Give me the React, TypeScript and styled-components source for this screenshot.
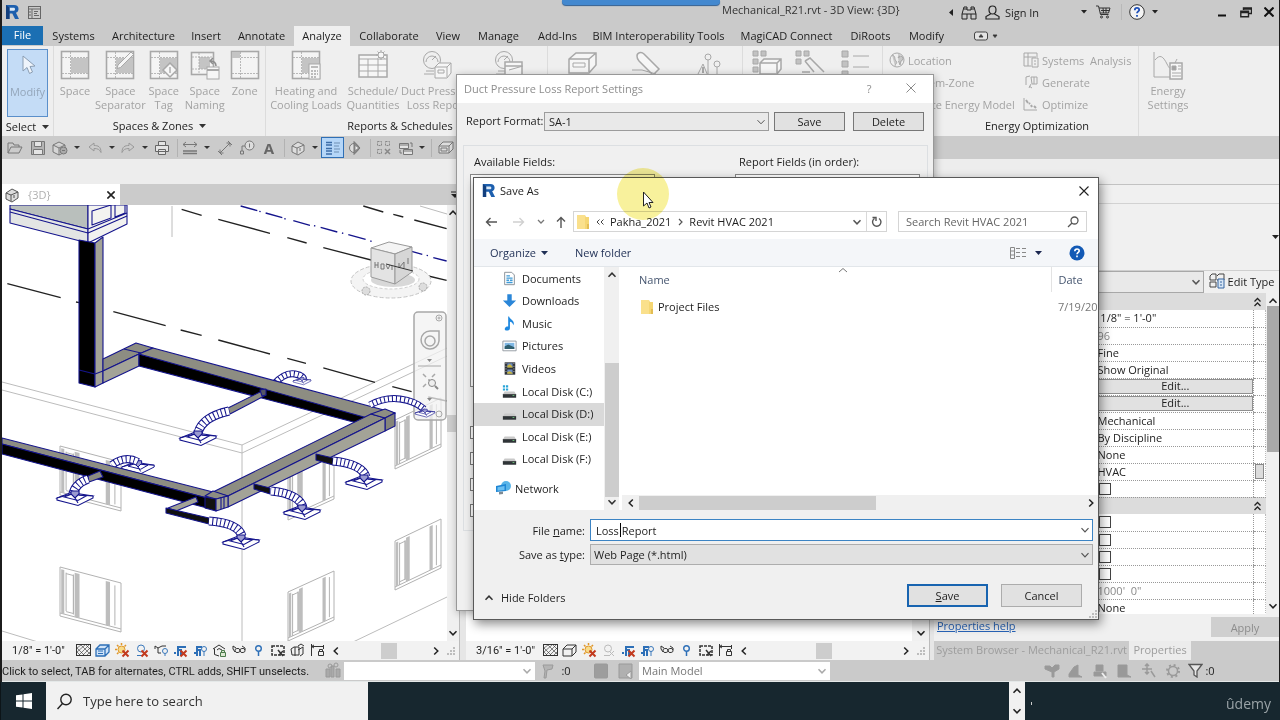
import React from "react";
import styled, { createGlobalStyle, css } from "styled-components";

const Global = createGlobalStyle`
  *, *::before, *::after { box-sizing: border-box; }
  html, body, #root { height: 100%; }
  body { margin: 0; overflow: hidden; background: #cacaca; }
  body, button, input, select { font-family: "Open Sans", "Noto Sans", sans-serif; font-size: 11px; color: #1e1e1e; }
  button { border: 0; padding: 0; background: none; }
  h1, h2, p, ul { margin: 0; padding: 0; font-size: 11px; font-weight: 400; list-style: none; }
  svg { display: block; flex: none; }
`;

/* ---------- shared pieces ---------- */

type IconProps = { w?: number; h?: number; c?: string; sw?: number; vb?: string; children: React.ReactNode };
const Icon = ({ w = 16, h = 16, c = "#666", sw = 1, vb, children }: IconProps) => (
  <svg width={w} height={h} viewBox={vb || `0 0 ${w} ${h}`} fill="none" stroke={c} strokeWidth={sw} aria-hidden="true">
    {children}
  </svg>
);

const Caret = ({ c = "#333" }: { c?: string }) => (
  <Icon w={7} h={4} c="none"><path d="M0 0h7L3.500 4z" fill={c} /></Icon>
);

const turns = { up: 180, down: 0, left: 90, right: 270 };
const Chevron = ({ dir = "down", c = "#555", sw = 1.5 }: { dir?: keyof typeof turns; c?: string; sw?: number }) => (
  <Icon w={10} h={10} c={c} sw={sw}><path d="M1.500 3.200 5 6.800l3.500-3.600" transform={`rotate(${turns[dir]} 5 5)`} /></Icon>
);

const Cross = ({ s = 10, c = "#222", sw = 1.2 }: { s?: number; c?: string; sw?: number }) => (
  <Icon w={s} h={s} c={c} sw={sw} vb="0 0 10 10"><path d="M.5.5l9 9M9.500.5l-9 9" /></Icon>
);

const Cell = styled.span<{ $w: number; $active?: boolean }>`
  flex: 0 0 ${p => p.$w}px;
  height: 100%;
  display: flex;
  align-items: center;
  justify-content: center;
  white-space: nowrap;
  ${p => p.$active && css`background: #b5d6f8; border: 1px solid #2f6fb5; margin: 1px 0; height: 21px;`}
`;
const Spring = styled.span`flex: 1 1 0;`;
const VLine = styled.i<{ $h?: number; $c?: string }>`
  width: 1px;
  height: ${p => p.$h || 18}px;
  background: ${p => p.$c || "#b2b2b2"};
`;

/* ---------- application frame ---------- */

const Screen = styled.div`
  position: relative;
  height: 100vh;
  display: flex;
  flex-direction: column;
  overflow: hidden;
`;
const AppFrame = styled.div`
  flex: 1 1 auto;
  min-height: 0;
  display: flex;
  flex-direction: column;
  background: #cacaca;
  border-left: 2px solid #1c1c1c;
  border-right: 1px solid #1c1c1c;
`;
const TitleBar = styled.header`
  position: relative;
  flex: 0 0 26px;
  display: flex;
  align-items: center;
  padding-left: 2px;
  padding-bottom: 2px;
`;
const DocTitle = styled.h1`
  flex: 0 0 222px;
  padding-bottom: 6px;
  white-space: nowrap;
  color: #333;
`;
const ShareBar = styled.div`
  position: absolute;
  left: 560px;
  top: 0;
  width: 158px;
  height: 5px;
  background: #4388cf;
  border-radius: 0 0 4px 4px;
  box-shadow: 0 1px 1px #2f5e92;
`;

const RevitLogo = ({ s = 15 }: { s?: number }) => (
  <svg width={s} height={s} viewBox="0 0 16 16" aria-label="Revit">
    <path d="M2 1h8c3 0 4.500 1.600 4.500 4 0 2-1 3.200-2.600 3.700L15 15h-4l-2.700-5.600H5.500V15H2z" fill="#1d5fae" />
    <path d="M5.500 3.800h4c1 0 1.500.6 1.500 1.400S10.500 6.700 9.500 6.700h-4z" fill="#dbe9f7" />
    <path d="M2 1l3.500 2.800V15H2z" fill="#123f7e" />
  </svg>
);

const TopBar = () => (
  <TitleBar>
    <ShareBar />
    <Cell $w={16}><RevitLogo s={16} /></Cell>
    <Cell $w={28}>
      <Icon w={13} h={13} c="#666"><rect x=".5" y=".5" width="12" height="12" /><path d="M.5 3h12M4 3v9M6 5.500h4M6 7.500h3M6 9.500h5M1 6h2M1 9h2" /></Icon>
    </Cell>
    <Spring />
    <DocTitle>Mechanical_R21.rvt - 3D View: &#123;3D&#125;</DocTitle>
    <Cell $w={14}><Icon w={4} h={7} c="none"><path d="M4 0v7L0 3.500z" fill="#222" /></Icon></Cell>
    <Cell $w={22}>
      <Icon w={16} h={15} c="#222"><path d="M1 9l2-7h3v3h4V2h3l2 7v5h-5V9H6v5H1zM1 9h5M10 9h5M3 4h3M10 4h3" /></Icon>
    </Cell>
    <Cell $w={24}>
      <Icon w={15} h={15} c="#222" sw={1.2}><path d="M7.500 1c2.300 0 3.500 1.600 3.500 3.800S9.700 9 7.500 9 4 7 4 4.800 5.200 1 7.500 1zM5.500 9L1 11.500V14h13v-2.500L9.500 9" /></Icon>
    </Cell>
    <Cell $w={36}>Sign In</Cell>
    <Cell $w={39} />
    <Cell $w={10}><Icon w={6} h={4} c="none"><path d="M0 0h6L3 3.500z" fill="#222" /></Icon></Cell>
    <Cell $w={28}>
      <Icon w={15} h={14} c="#333"><path d="M0 1h2.500l2 8.500h8M3 3h11l-1.500 5H4.300M5 5.500h8.500M7 3l.5 5M10 3v5" /><circle cx="5.500" cy="12" r="1" /><circle cx="11.500" cy="12" r="1" /></Icon>
    </Cell>
    <Cell $w={8}><VLine $c="#b8b8b8" $h={16} /></Cell>
    <Cell $w={24}>
      <Icon w={16} h={16} c="#333"><circle cx="8" cy="8" r="7.300" fill="#f4f4f4" /><path d="M5.800 6.200c0-1.600 1-2.300 2.200-2.300s2.200.8 2.200 2S8 7.700 8 9.300M8 11v1.700" stroke="#1f50b8" strokeWidth="1.800" /></Icon>
    </Cell>
    <Cell $w={12}><Icon w={6} h={4} c="none"><path d="M0 0h6L3 3.500z" fill="#222" /></Icon></Cell>
    <Cell $w={50} />
    <Cell $w={22}><Icon w={8} h={10} c="#111" sw={2}><path d="M0 8.500h8" /></Icon></Cell>
    <Cell $w={25}><Icon w={12} h={11} c="#222" sw={1.4}><path d="M3.500 3V1h8v5.500h-3M.8 4.200h7.700v5.500H.8z M.8 5.500h7.700M4 2h7" /></Icon></Cell>
    <Cell $w={21}><Cross s={10} sw={2} c="#111" /></Cell>
  </TitleBar>
);

/* ---------- ribbon tabs ---------- */

const TabRow = styled.nav`
  flex: 0 0 20px;
  display: flex;
  align-items: stretch;
`;
const RibbonTab = styled.button<{ $w: number; $kind?: "file" | "on" }>`
  flex: 0 0 ${p => p.$w}px;
  padding-bottom: 2px;
  white-space: nowrap;
  ${p => p.$kind === "file" && css`background: #1b6fb3; color: #fff; height: 19px;`}
  ${p => p.$kind === "on" && css`background: #efefef;`}
`;
const tabs: [string, number, ("file" | "on")?][] = [
  ["File", 41, "file"], ["Systems", 61], ["Architecture", 79], ["Insert", 46], ["Annotate", 65],
  ["Analyze", 56, "on"], ["Collaborate", 78], ["View", 40], ["Manage", 61], ["Add-Ins", 57],
  ["BIM Interoperability Tools", 145], ["MagiCAD Connect", 111], ["DiRoots", 57], ["Modify", 55],
];

/* ---------- ribbon ---------- */

const RibbonBar = styled.section`
  flex: 0 0 89px;
  display: flex;
  background: #efefef;
  color: #a0a0a0;
`;
const Panel = styled.div<{ $w?: number; $line?: boolean }>`
  flex: ${p => (p.$w ? `0 0 ${p.$w}px` : "1 1 0")};
  display: flex;
  flex-direction: column;
  border-right: ${p => (p.$line === false ? 0 : 1)}px solid #dcdcdc;
`;
const PanelBody = styled.div<{ $pad?: number }>`
  flex: 0 0 70px;
  display: flex;
  padding-left: ${p => p.$pad || 0}px;
`;
const PanelName = styled.div<{ $indent?: number }>`
  height: 19px;
  display: flex;
  gap: 6px;
  align-items: center;
  justify-content: center;
  padding-left: ${p => p.$indent || 0}px;
  color: #222;
  white-space: nowrap;
`;
const BigButton = styled.button<{ $w: number; $sel?: boolean }>`
  flex: 0 0 ${p => p.$w}px;
  display: flex;
  flex-direction: column;
  align-items: center;
  padding-top: 4px;
  line-height: 14px;
  color: #a3a3a3;
  white-space: pre;
  svg { margin-bottom: 4px; }
  ${p => p.$sel && css`
    margin: 3px 0 0 5px;
    height: 68px;
    padding-top: 1px;
    background: #c4dcf6;
    border: 1px solid #5a8fca;
    color: #94a6ba;
  `}
`;
const SmallColumn = styled.div<{ $w: number }>`
  flex: 0 0 ${p => p.$w}px;
  padding-top: 3px;
`;
const SmallButton = styled.button`
  height: 22px;
  display: flex;
  align-items: center;
  gap: 3px;
  color: #a3a3a3;
  white-space: pre;
`;

const G = "#a8a8a8";
const SpaceBase = ({ fill = true }: { fill?: boolean }) => (
  <>
    <rect x="1.500" y="1.500" width="27" height="27" fill="#f4f4f4" strokeWidth="1.600" />
    {fill && <rect x="11" y="8" width="17" height="15" fill="#c4c4c4" stroke="none" />}
    <path d="M10.500 2v26M2 7.500h26M2 23.500h26" strokeDasharray="2 1" strokeWidth=".8" />
  </>
);
const Ic = ({ children }: { children: React.ReactNode }) => <Icon w={30} h={30} c={G}>{children}</Icon>;
const Gauge = () => (
  <><circle cx="10" cy="10" r="8.500" /><path d="M4 12a6 6 0 0 1 12 0M10 10l4-4M4 21h8M2 24h10" /></>
);

const Ribbon = () => (
  <RibbonBar>
    <Panel $w={52}>
      <PanelBody>
        <BigButton $w={41} $sel>
          <Icon w={30} h={30} c="#8a9db2"><path d="M10 5l0 15 4-3.500 2.500 6 3-1.500-2.500-5.500 5-.5z" fill="#eef4fb" /></Icon>
          Modify
        </BigButton>
      </PanelBody>
      <PanelName>Select <Caret /></PanelName>
    </Panel>
    <Panel $w={212}>
      <PanelBody $pad={1}>
        <BigButton $w={40}><Ic><SpaceBase /></Ic>Space</BigButton>
        <BigButton $w={49}><Ic><SpaceBase /><path d="M13 15L26 2l2.500 2.500-13 13-3.500 1z" fill="#f6f6f6" /></Ic>{"Space\nSeparator"}</BigButton>
        <BigButton $w={36}><Ic><SpaceBase /><path d="M21 13l7 7-7 7-7-7z" fill="#f6f6f6" strokeWidth="1.500" /><path d="M21 17v6" stroke="#8c8c8c" /></Ic>{"Space\nTag"}</BigButton>
        <BigButton $w={46}><Ic><rect x="1.500" y="2.500" width="22" height="22" fill="#f4f4f4" strokeWidth="1.600" /><rect x="9" y="7" width="11" height="12" fill="#c4c4c4" stroke="none" /><path d="M9 3v22M2 7h22M2 19h22" strokeDasharray="2 1" strokeWidth=".8" /><rect x="17" y="17" width="12" height="12" fill="#f6f6f6" /><path d="M17 20h12" strokeWidth="2" /><path d="M26 16c0-4-2-5-6-5m3-3l-3 3 3 3" stroke="#8c8c8c" strokeWidth="1.500" /></Ic>{"Space\nNaming"}</BigButton>
        <BigButton $w={34}><Ic><SpaceBase fill={false} /><rect x="2" y="2" width="8" height="6" fill="#c4c4c4" stroke="none" /></Ic>Zone</BigButton>
      </PanelBody>
      <PanelName>Spaces &amp; Zones <Caret /></PanelName>
    </Panel>
    <Panel $w={282}>
      <PanelBody>
        <BigButton $w={80}><Ic><SpaceBase /><rect x="18" y="14" width="11" height="15" fill="#f6f6f6" /><path d="M20 17h7M20 21h2M23 21h2M26 21h1M20 24h2M23 24h2M26 24h1M20 27h2M23 27h2" strokeWidth="1.500" /></Ic>{"Heating and\nCooling Loads"}</BigButton>
        <BigButton $w={54}><Ic><rect x="1" y="5" width="28" height="22" fill="#f6f6f6" strokeWidth="1.500" /><path d="M1 9h28M1 15h28M1 21h28M10 9v18M20 9v18" /><circle cx="23" cy="5" r="3" fill="#f6f6f6" /><path d="M23 0v10M18 5h10M19.500 1.500l7 7M26.500 1.500l-7 7" strokeDasharray="2 6" /></Ic>{"Schedule/\nQuantities"}</BigButton>
        <BigButton $w={74}><Ic><Gauge /><path d="M13 17l4-4h12v10l-4 5H13zM13 17h12v10M25 17l4-4" fill="#f6f6f6" /><path d="M16 20h6v3h-6z" /></Ic>{"Duct Pressure\nLoss Report"}</BigButton>
        <BigButton $w={70}><Ic><Gauge /><path d="M11 12h17v16H11zM11 16h17" fill="#f6f6f6" strokeWidth="1.500" /><path d="M15 20l14-4" /></Ic></BigButton>
      </PanelBody>
      <PanelName>Reports &amp; Schedules <Caret /></PanelName>
    </Panel>
    <Panel $w={195}>
      <PanelBody>
        <BigButton $w={68}><Ic><path d="M2 9l7-6h20v12l-7 8H2zM2 9h20v13M22 9l7-6" fill="#f6f6f6" strokeWidth="1.500" /><path d="M6 13h12v4H6z" /></Ic></BigButton>
        <BigButton $w={60}><Ic><path d="M6 6c0-3 4-5 7-2l15 15-6 6L8 11c-1.500-1.500-2-3-2-5z" fill="#f6f6f6" strokeWidth="1.500" /><path d="M1 20h10l14 4" /></Ic></BigButton>
        <BigButton $w={60}><Ic><circle cx="17" cy="7" r="3" /><circle cx="26" cy="14" r="3" /><path d="M17 10v14M26 17v10M6 26l6-12 5 12z" /><path d="M12 17v6" strokeWidth="2" /></Ic></BigButton>
      </PanelBody>
    </Panel>
    <Panel $w={140}>
      <PanelBody $pad={1}>
        <BigButton $w={46}><Ic><path d="M1 1h5v5H1zM9 1h5v5H9zM1 9h5v5H1zM1 17h5v5H1z" fill="#c2c2c2" /><path d="M8 13l4-4h17v10l-4 5H8zM8 13h17v10M25 13l4-4" fill="#f6f6f6" strokeWidth="1.500" /></Ic></BigButton>
        <BigButton $w={40}><Ic><path d="M1 1h5v5H1zM9 1h5v5H9zM1 9h5v5H1z" fill="#c2c2c2" /><path d="M10 11l5-3 14 14M7 22h8M10 11l9 11" strokeWidth="1.500" /></Ic></BigButton>
        <BigButton $w={50}><Ic><path d="M2 1h6v6H2zM2 11h6v6H2zM2 21h6v6H2z" fill="#c2c2c2" /><path d="M13 6h16M13 17h16M13 26h16" /></Ic></BigButton>
      </PanelBody>
    </Panel>
    <Panel>
      <PanelBody $pad={6}>
        <SmallColumn $w={134}>
          <SmallButton><Icon c={G}><circle cx="8" cy="8" r="7" /><path d="M3 3c4 1 2 4 4 6s-1 3-1 5M10 2v4M9 6a2.500 2.500 0 1 1 3 3l-1 4-1.500-4" fill="#c8c8c8" /></Icon>Location</SmallButton>
          <SmallButton><Icon c={G}><path d="M2 2h8v8H2zM8 8h6v6H8z" /></Icon>System-Zone</SmallButton>
          <SmallButton><Icon c={G}><path d="M2 6l6-4 6 4v8H2z" /></Icon>Create Energy Model</SmallButton>
        </SmallColumn>
        <SmallColumn $w={113}>
          <SmallButton><Icon c={G}><path d="M1 1h13v4M1 1v13h7M5 1v13M1 5h12M9 6h6v9H9zM11 9h2M11 12h2" /></Icon>Systems  Analysis</SmallButton>
          <SmallButton><Icon c={G}><path d="M3 3v8M3 3l4-1M6 14l2-4M8 3h6v7H9zM11 3v7M6 12l3 2" /></Icon>Generate</SmallButton>
          <SmallButton><Icon c={G}><path d="M1 2v12h13" /><path d="M3 4l2 3M6 7l1 1M8 9l1 2M11 10l2 2" strokeWidth="2" /></Icon>Optimize</SmallButton>
        </SmallColumn>
      </PanelBody>
      <PanelName $indent={53}>Energy Optimization</PanelName>
    </Panel>
    <Panel $w={140} $line={false}>
      <PanelBody>
        <BigButton $w={58}><Ic><path d="M1 2v25h26M2 10c5-6 8-4 12 4s5 5 10-5" /><rect x="17" y="13" width="12" height="16" fill="#f6f6f6" strokeWidth="1.500" /><path d="M19 16h4v4h-4z" fill="#a4a4a4" /><path d="M25 16h3M25 19h3M19 23h9M19 26h9" /></Ic>{"Energy\nSettings"}</BigButton>
      </PanelBody>
    </Panel>
  </RibbonBar>
);

/* ---------- quick access bar ---------- */

const QuickBar = styled.div`
  flex: 0 0 23px;
  display: flex;
  padding-left: 2px;
  background: #cbcbcb;
`;
const BoldA = styled.b`font-size: 15px; color: #666;`;
const Sep = ({ w }: { w: number }) => <Cell $w={w}><VLine /></Cell>;
const Drop = ({ w }: { w: number }) => <Cell $w={w}><Icon w={6} h={3} c="none"><path d="M0 0h6L3 3z" fill="#333" /></Icon></Cell>;
const House = () => <path d="M2 6l6-4 6 3v6l-6 4-6-3zM2 6l5 2v6M7 8l7-3M10 8v3" fill="#ddd" />;

const QuickAccess = () => (
  <QuickBar>
    <Cell $w={22}><Icon c="#777"><path d="M1 13V3h5l1 2h5v2M1 13l3-6h11l-3 6z" /></Icon></Cell>
    <Cell $w={24}><Icon c="#777"><path d="M1.500 1.500h13v13h-13z" fill="#b4b4b4" /><path d="M4.500 1.500h7v5h-7zM3.500 9.500h9v5h-9z" fill="#e4e4e4" /></Icon></Cell>
    <Cell $w={20}><Icon c="#777"><path d="M1 5l6-3 6 3v7l-6 3-6-3zM1 5l6 3 6-3M7 8v7" fill="#d5d5d5" /><circle cx="11.500" cy="10.500" r="3.500" fill="#aaa" /><path d="M10 10.500h3" /></Icon></Cell>
    <Drop w={14} />
    <Cell $w={22}><Icon c="#999"><path d="M2 7l5-4v2.500c4 0 7 1 7 7-1.500-3-3-4-7-4V11z" /></Icon></Cell>
    <Drop w={11} />
    <Cell $w={22}><Icon c="#999"><path d="M14 7L9 3v2.500c-4 0-7 1-7 7 1.500-3 3-4 7-4V11z" /></Icon></Cell>
    <Drop w={11} />
    <Cell $w={24}><Icon c="#666"><path d="M4.500 1.500h7v4h-7zM1.500 5.500h13v6h-13zM4.500 9.500h7v5h-7z" fill="#e4e4e4" /></Icon></Cell>
    <Sep w={6} />
    <Cell $w={20}><Icon c="#777"><path d="M1 4.500h14M4 2L1 4.500 4 7M12 2l3 2.500L12 7" /><path d="M1 11h14M1 13.500h14" strokeWidth="1.500" /></Icon></Cell>
    <Drop w={13} />
    <Cell $w={24}><Icon c="#777"><path d="M3 13L13 3M1 11l4 4M11 1l4 4M3 9.500V13h3.500M13 6.500V3H9.500" /></Icon></Cell>
    <Cell $w={20}><Icon c="#777"><circle cx="10.500" cy="5.500" r="4.500" fill="#ddd" /><path d="M10.500 3.500v4M6 6H3v5M1.500 11h3v3h-3z" /></Icon></Cell>
    <Cell $w={24}><BoldA>A</BoldA></Cell>
    <Sep w={7} />
    <Cell $w={20}><Icon c="#777"><House /></Icon></Cell>
    <Drop w={13} />
    <Cell $w={23} $active><Icon c="#3c6ca6" sw={1.5}><path d="M1 2.500h6M1 5h6M1 8.500h6M1 11h6M1 14h6" /><path d="M9 3h6M9 6h5M9 9h6M9 12h5" stroke="#6f8fb3" strokeWidth="1" /></Icon></Cell>
    <Cell $w={22}><Icon c="#777"><circle cx="7" cy="8" r="4.500" fill="#ddd" /><path d="M7 1.500L13 8l-6 6.500z" fill="#8a8a8a" /><path d="M8.500 6L11 8l-2.500 2z" fill="#eee" stroke="none" /></Icon></Cell>
    <Sep w={8} />
    <Cell $w={20}><Icon c="#888"><path d="M1.500 1.500h4v4h-4zM9.500 1.500h4v4h-4zM1.500 9.500h4v4h-4z" strokeDasharray="2 1" /><path d="M9 9l5 5M14 9l-5 5" strokeWidth="1.500" /></Icon></Cell>
    <Cell $w={24}><Icon c="#777"><path d="M1.500 3.500h9v5h-9zM5.500 9.500h9v5h-9z" fill="#e4e4e4" /><path d="M1 5h9M5 11h9M12 3h2v4M4 13H2v-3" /></Icon></Cell>
    <Drop w={8} />
    <Sep w={10} />
    <Cell $w={20}><Icon c="#777"><path d="M1 6l4-4h10v7l-4 4H1zM1 6h10v7M11 6l4-4" fill="#ddd" /><path d="M3 8h6v3H3z" /></Icon></Cell>
  </QuickBar>
);

/* ---------- drawing views ---------- */

const OptionsBar = styled.div`flex: 0 0 25px; background: #ededed;`;
const WorkArea = styled.main`
  flex: 1 1 auto;
  min-height: 0;
  display: flex;
  background: #ededed;
`;
const View = styled.section<{ $w?: number }>`
  flex: ${p => (p.$w ? `0 0 ${p.$w}px` : "1 1 0")};
  min-width: 0;
  display: flex;
  flex-direction: column;
  background: #fff;
`;
const ViewTabs = styled.div`
  flex: 0 0 21px;
  display: flex;
  align-items: center;
  justify-content: space-between;
  background: #cbcbcb;
`;
const ViewTab = styled.div`
  width: 118px;
  height: 100%;
  padding: 0 5px 0 2px;
  display: flex;
  align-items: center;
  justify-content: space-between;
  background: #fff;
  color: #b0b0b0;
  span { flex: 1; padding-left: 8px; }
`;
const ViewBody = styled.div`flex: 1 1 0; min-height: 0; display: flex;`;
const Canvas = styled.div`flex: 1 1 0; min-width: 0; overflow: hidden; background: #fff;`;
const VScroll = styled.div<{ $w?: number }>`
  flex: 0 0 ${p => p.$w || 12}px;
  display: flex;
  flex-direction: column;
  align-items: center;
  justify-content: space-between;
  padding: 3px 0;
  background: #f0f0f0;
`;
const Thumb = styled.i<{ $w: number; $h: number; $c?: string }>`
  width: ${p => p.$w}px;
  height: ${p => p.$h}px;
  background: ${p => p.$c || "#cdcdcd"};
`;
const ControlBar = styled.div`
  flex: 0 0 19px;
  display: flex;
  align-items: center;
  background: #f2f2f2;
  overflow: hidden;
`;
const ScaleText = styled.span<{ $w: number }>`
  flex: 0 0 ${p => p.$w}px;
  padding-left: 10px;
  font-family: Roboto, sans-serif;
  white-space: nowrap;
`;
const Gutter = styled.div<{ $w: number }>`flex: 0 0 ${p => p.$w}px; background: #e6e6e6; border-left: 1px solid #bbb;`;

const RedX = () => <path d="M7.500 7.500l6 6M13.500 7.500l-6 6" stroke="#c23a1e" strokeWidth="2" />;
const controlIcons: Record<string, React.ReactNode> = {
  detail: <><rect x=".5" y="1.500" width="14" height="11" /><path d="M1 5l4-3M1 9l8-7M2 13L13 2M6 13l8-8M10 13l4-4M1 9l4 4M1 5l8 8M5 2l9 9M10 2l4 4" strokeWidth=".6" /></>,
  style: <><path d="M1 6l4-4h9v7l-4 4H1zM1 6h9v7M10 6l4-4" fill="#cfe3f8" stroke="#2d6fb7" strokeWidth="1.300" /><path d="M3 8h5M3 10.500h5" stroke="#2d6fb7" /></>,
  wire: <path d="M1 6l4-4h9v7l-4 4H1zM1 6h9v7M10 6l4-4" />,
  sun: <><circle cx="6.500" cy="6.500" r="3.500" fill="#f8dc8a" stroke="#e0972a" /><path d="M6.500 0v2M0 6.500h2M2 2l1.500 1.500M11 2L9.500 3.500M2 11l1.500-1.500" stroke="#e0972a" strokeWidth="1.500" /><RedX /></>,
  shadow: <><circle cx="7" cy="5.500" r="3.500" stroke="#3a78bb" /><path d="M3 12.500h5" stroke="#3a78bb" /><RedX /></>,
  noshadow: <><circle cx="7" cy="5.500" r="3.500" stroke="#bbb" /><path d="M3 12.500h5M8 8l5 5M13 8l-5 5" stroke="#bbb" /></>,
  render: <><path d="M1 3l3 2v5h3M4 5l4-2h4M1 3v3" /><circle cx="11" cy="8" r="2.500" stroke="#3a78bb" /><path d="M11 10.500V13" stroke="#3a78bb" /></>,
  cropOff: <><path d="M1 10h2M5 13V4h8M5 7h3v6" stroke="#2d6fb7" strokeWidth="2" /><RedX /></>,
  crop: <><path d="M1 10h2M4 13V4h5M4 7h3v6" stroke="#2d6fb7" strokeWidth="2" /><circle cx="11" cy="6" r="2.500" stroke="#3a78bb" /><path d="M11 8v5" stroke="#3a78bb" /></>,
  lock: <><path d="M1 6l6-4 6 4M2.500 5.500v6L7 13M5 7l2-1.500L10 7" /><path d="M8.500 9.500h5v4h-5zM9.500 9V7.500h3V9" fill="#dbe8d2" stroke="#4b7a4b" /></>,
  glasses: <path d="M1 3l3 2M1 3v3l2 3M3 8a2.500 2 0 1 0 5-1 2.500 2 0 1 0-5 1M8 8a2.500 2 0 1 0 5-1 2.500 2 0 1 0-5 1M13 7V5l-3-2" />,
  bulb: <><circle cx="7.500" cy="5.500" r="2.800" stroke="#2d6fb7" strokeWidth="1.400" /><path d="M7.500 8.500V13" stroke="#2d6fb7" strokeWidth="1.500" /></>,
  temp: <><rect x="1" y="3" width="12" height="9" strokeDasharray="3 1" strokeWidth="1.500" /><path d="M7 7l5 6M12 8l-4 4" strokeWidth="1.500" /></>,
  analytic: <path d="M1 6l3-2h5v8H2zM5 4v9M8 7l5-3v7l-3 2M8 3l3-2 3 2" />,
  constraint: <><path d="M1.500 1v12M1 3.500h12M13.500 2v4M4 2L1.500 3.500 4 5" /><path d="M8.500 8.500h5v4h-5zM9.500 8V6.500h3V8" /></>,
};
const leftIcons = ["detail", "style", "sun", "shadow", "render", "cropOff", "crop", "lock", "glasses", "bulb", "temp", "analytic", "constraint"];
const rightIcons = ["detail", "wire", "sun", "noshadow", "cropOff", "crop", "glasses", "bulb", "temp", "constraint"];

const Grip = () => (
  <Icon w={9} h={9} c="none"><path d="M7 1h2v2H7zM4 4h2v2H4zM7 4h2v2H7zM1 7h2v2H1zM4 7h2v2H4zM7 7h2v2H7z" fill="#bdbdbd" /></Icon>
);

const ViewControls = ({ scale, w, icons, pre }: { scale: string; w: number; icons: string[]; pre: number }) => (
  <ControlBar>
    <ScaleText $w={w}>{scale}</ScaleText>
    {icons.map((n, i) => <Cell key={n} $w={i % 2 ? 19 : 20}><Icon w={15} h={15} c="#333">{controlIcons[n]}</Icon></Cell>)}
    <Cell $w={18}><Chevron dir="left" c="#222" /></Cell>
    <Cell $w={pre} />
    <Thumb $w={16} $h={16} />
    <Spring />
    <Cell $w={10}><Chevron dir="right" c="#222" /></Cell>
    <Cell $w={18}><Grip /></Cell>
  </ControlBar>
);

const NAVY = "#14148c";

const Diffuser = ({ x, y, s = 1 }: { x: number; y: number; s?: number }) => (
  <g transform={`translate(${x} ${y}) scale(${s})`} stroke={NAVY} strokeWidth={1.1} fill="#fff">
    <path d="M-18 0-4-5.500 18-2 3 5z" /><path d="M-18 0v2L3 7.500 18 0v-2" /><path d="M-11-1l8-3 14 2L3 2.500z" />
    <path d="M-4-4v-3h8v3L0 0zM-18 0L-4-4M18-2L4-3M3 5L0 0" fill="#9a9ad0" />
  </g>
);
const Flex = ({ d, w = 8 }: { d: string; w?: number }) => (
  <g fill="none"><path d={d} stroke={NAVY} strokeWidth={w + 1} /><path d={d} stroke="#fff" strokeWidth={w - 1} strokeDasharray="3 1" /></g>
);

/* A window on the west (rise > 0) or south (rise < 0) wall, in oblique view. */
const WallWindow = ({ x, y, w, rise }: { x: number; y: number; w: number; rise: number }) => {
  const at = (t: number, v: number) => `${x + w * t} ${y + rise * t + v}`;
  const bar = (a: number, b: number) => `M${at(a, 2)}L${at(b, 2)}L${at(b, 46)}L${at(a, 46)}z`;
  return (
    <g stroke="#b2b2b2" strokeWidth="1" fill="none">
      <path d={`M${at(0, 0)}L${at(1, 0)}L${at(1, 49)}L${at(0, 49)}z`} />
      <path d={`M${at(0, 46)}L${at(1, 46)}M${at(0.1, 5)}L${at(0.22, 5)}L${at(0.22, 43)}M${at(0.1, 43)}L${at(0.22, 43)}`} />
      <path d={bar(0.24, 0.32) + bar(0.75, 0.82) + bar(0.02, 0.07)} fill="#bdbdbd" stroke="none" />
      <path d={`M${at(0.1, 4)}V${y + 44}M${at(0.22, 4)}L${at(0.22, 44)}M${at(0.9, 4)}L${at(0.9, 44)}`} />
    </g>
  );
};

const Model = () => (
  <svg width="445" height="437" viewBox="2 204 445 437" fill="none" role="img" aria-label="3D duct model">
    <g stroke="#bcbcbc">
      <path d="M2 381L242 444 447 347M2 389L242 452 447 355M242 444V641M2 630L38 641M353 641L447 596M172 205V236M420 205L447 213" />
    </g>
    <WallWindow x={60} y={445} w={61} rise={16} />
    <WallWindow x={60} y={566} w={61} rise={16} />
    <WallWindow x={288} y={470} w={46} rise={-21} />
    <WallWindow x={288} y={591} w={46} rise={-21} />
    <WallWindow x={395} y={419} w={46} rise={-22} />
    <WallWindow x={395} y={540} w={46} rise={-22} />
    <g transform="translate(0 180) scale(.3333)" stroke="#222" strokeWidth="4">
      <path d="M22 308l160 42M228 363l10 2M340 392l157 42M542 447l63 16M655 477l155 42M862 532l56 15M970 561l155 43M1177 617l58 15M1285 648l55 12" />
      <path d="M545 85l60 18M655 115l155 42M862 170l58 16M970 200l155 40M1285 285l55 13M1090 75l60 18M1180 100l30 8M1243 117l97 26" />
      <path d="M722 75l50 14M778 91l4 1M797 96l50 14M853 113l4 1M880 119l50 14M942 134l4 1M962 139l50 14M1026 156l4 1M1045 161l52 14M1111 180l4 1M1235 211l32 9M1280 223l4 1M1300 230l40 10" stroke={NAVY} />
    </g>

    <g stroke={NAVY} strokeWidth="1.100" strokeLinejoin="round">
      <path d="M10 204h78v24L10 208z" fill="#b9bfbc" />
      <path d="M10 208L88 228V242L10 222z" fill="#e3e5e4" />
      <path d="M88 204h39v19L88 242z" fill="#f2f2f0" />
      <path d="M10 211L88 232 127 215M88 228L127 212M92 224v-14l19-6v13zM115 204v12l10-4v-8" />
      <path d="M79 239L95 242V386L79 382z" fill="#000" />
      <path d="M95 242L103 236V382L95 386z" fill="#a3a397" />
      <path d="M79 369L95 373 103 370" />
      <path d="M103 358L136 342 153 347 139 353 103 370z" fill="#8d8d82" />
      <path d="M103 370L139 353V365L103 382z" fill="#a3a397" />
      <path d="M124 348L141 352" />
    </g>

    <Flex d="M274 383Q285 371 295 373T303 379" w={6} />
    <Diffuser x={302} y={380} s={0.5} />
    <g stroke={NAVY} strokeWidth="1.100" strokeLinejoin="round">
      <path d="M139 353L371 415 361 423 139 365z" fill="#000" />
      <path d="M153 347L395 412 371 418 139 353z" fill="#8d8d82" />
      <path d="M228 407L262 390 266 394 230 413z" fill="#8d8d82" />
      <path d="M260 389l6-1v6l-4 1z" fill="#556" />
    </g>
    <Flex d="M229 410Q202 416 198 432" />
    <Diffuser x={198} y={437} />
    <Diffuser x={138} y={466} s={0.9} />
    <Flex d="M112 464Q125 454 138 461" w={7} />
    <g stroke={NAVY} strokeWidth="1.100" strokeLinejoin="round">
      <path d="M371 413L213 491 228 495 385 417z" fill="#8d8d82" />
      <path d="M371 413L385 408 395 412 385 417z" fill="#8d8d82" />
      <path d="M385 417L395 412V425L385 430z" fill="#85857a" />
      <path d="M385 417L228 495V506L385 430z" fill="#a3a397" />
      <path d="M2 437L213 491 207 497 2 443z" fill="#8d8d82" />
      <path d="M2 443L207 497V507L2 453z" fill="#000" />
      <path d="M205 495L213 490 228 495 216 498z" fill="#8d8d82" />
      <path d="M205 496L216 498V510L205 507z" fill="#111" />
      <path d="M216 498L228 495V506L216 510z" fill="#a3a397" />
      <path d="M221 496V508M224 496V507" />
      <path d="M88 475L100 470 103 476 89 481z" fill="#8d8d82" />
      <path d="M196 496L168 507 176 510 198 501z" fill="#a3a397" />
      <path d="M166 507L209 517V523L166 512z" fill="#111" />
      <path d="M254 483L270 487V493L254 488z" fill="#111" />
      <path d="M316 453L333 457V464L316 459z" fill="#111" />
    </g>
    <Flex d="M88 478Q75 483 73 493" />
    <Diffuser x={75} y={497} />
    <Flex d="M333 460Q362 463 366 476" />
    <Diffuser x={364} y={481} />
    <Flex d="M271 490Q300 493 303 507" />
    <Diffuser x={302} y={511} />
    <Flex d="M209 520Q238 522 242 535" />
    <Diffuser x={241} y={541} />

    <g>
      <ellipse cx="391" cy="280" rx="40" ry="17" stroke="#c4c4c4" strokeDasharray="4 2" fill="#f4f4f4" />
      <ellipse cx="391" cy="278" rx="28" ry="10" fill="#fff" stroke="#d0d0d0" strokeDasharray="3 2" />
      <ellipse cx="393" cy="279" rx="22" ry="7" fill="#d8d8d8" />
      <path d="M371 247L389 241 412 246 395 253z" fill="#f4f4f4" stroke="#999" />
      <path d="M371 247L395 253V283L371 276z" fill="#e3e3e3" stroke="#999" />
      <path d="M395 253L412 246V271L395 283z" fill="#d6d6d6" stroke="#999" />
      <path d="M375 261v6M375 264h3M378 261v6M381 263h3v5h-3zM386 264l2 4 2-4M392 265v4M399 262v5l5-6v6M408 257v6" stroke="#777" />
      <path d="M386 263L413 270" stroke="#333" />
      <circle cx="366" cy="290" r="4" fill="#ddd" stroke="#aaa" strokeDasharray="2 1" />
      <circle cx="423" cy="286" r="4" fill="#ddd" stroke="#aaa" strokeDasharray="2 1" />
    </g>
    <g stroke="#a8a8a8">
      <rect x="414" y="311" width="32" height="108" rx="4" fill="#f2f2f2" fillOpacity=".75" strokeWidth="1.500" />
      <circle cx="439" cy="317" r="3" /><circle cx="439" cy="317" r="1" />
      <path d="M430 330h9v10a9 9 0 1 1-9-10z" strokeWidth="1.500" /><circle cx="430" cy="340" r="5" strokeWidth="1.500" />
      <path d="M427 358h5l-2.500 3zM427 397h5l-2.500 3z" fill="#888" stroke="none" />
      <path d="M418 365h23" />
      <path d="M423 373l3 3M435 373l-3 3M423 386l3-3M428 379h2" strokeWidth="1.500" />
      <circle cx="432" cy="382" r="3.500" fill="#eee" stroke="#888" /><path d="M435 385l3 3" stroke="#888" strokeWidth="2" />
      <circle cx="439" cy="413" r="3" />
    </g>
    <Flex d="M370 404Q385 396 400 398T424 408" w={6} />
    <Diffuser x={425} y={412} s={0.55} />
  </svg>
);

/* ---------- properties palette ---------- */

const Palette = styled.aside`
  flex: 0 0 345px;
  display: flex;
  flex-direction: column;
  background: #f0f0f0;
`;
const PaletteHead = styled.div`
  flex: 0 0 20px;
  border-top: 1px solid #c2c2c2;
  border-bottom: 1px solid #d2d2d2;
`;
const Preview = styled.div`
  flex: 0 0 67px;
  display: flex;
  align-items: center;
  justify-content: flex-end;
  border-bottom: 1px solid #cfcfcf;
`;
const TypeRow = styled.div`
  flex: 0 0 22px;
  display: flex;
  align-items: center;
`;
const SelectBox = styled.span<{ $h: number; $bg?: string; $b?: string; $pad?: number }>`
  position: relative;
  flex: 1 1 0;
  display: flex;
  height: ${p => p.$h}px;
  select, input {
    appearance: none;
    width: 100%;
    height: 100%;
    margin: 0;
    border: 1px solid ${p => p.$b || "#a8a8a8"};
    border-radius: 0;
    padding: 0 4px;
    padding-left: ${p => p.$pad || 4}px;
    background: ${p => p.$bg || "#e9e9e9"};
    outline: 0;
  }
  svg { position: absolute; right: 3px; top: calc(50% - 5px); pointer-events: none; }
`;
const EditType = styled.button`
  flex: 0 0 75px;
  display: flex;
  align-items: center;
  justify-content: center;
  gap: 3px;
  padding-bottom: 2px;
  white-space: nowrap;
`;
const GridArea = styled.div`
  flex: 0 0 321px;
  display: flex;
  overflow: hidden;
`;
const PropTable = styled.table`
  flex: 1 1 0;
  table-layout: fixed;
  border-collapse: collapse;
  background: #fff;
  tr { height: 17px; }
  th, td { padding: 0; line-height: 15px; vertical-align: top; border-bottom: 1px dotted #999; text-align: left; font-weight: 400; white-space: pre; }
  td + td { border-left: 1px dotted #999; border-right: 1px dotted #bbb; }
`;
const GroupRow = styled.tr`
  && th { background: #dcdcdc; border: 0; vertical-align: middle; }
  svg { margin: 0 4px 0 auto; }
`;
const Value = styled.td<{ $dim?: boolean }>`color: ${p => (p.$dim ? "#8a8a8a" : "#222")};`;
const EditButton = styled.button`
  width: 100%;
  height: 15px;
  display: block;
  line-height: 12px;
  background: #e1e1e1;
  border: 1px solid #8f8f8f;
`;
const Tick = styled.input`
  appearance: none;
  display: block;
  width: 12px;
  height: 12px;
  margin: 2px 0 0 1px;
  background: #fff;
  border: 1px solid #444;
`;
const Knob = styled.i`display: block; width: 9px; height: 15px; margin-left: 1px; background: #dcdcdc; border: 1px solid #888;`;
const ApplyRow = styled.div`
  flex: 1 1 0;
  display: flex;
  align-items: flex-start;
  justify-content: space-between;
  padding-left: 3px;
  a { color: #2864b8; margin-top: 4px; }
  button { width: 68px; height: 20px; margin-top: 3px; background: #cfcfcf; color: #8d8d8d; }
`;
const PaletteTabs = styled.div`
  flex: 0 0 19px;
  display: flex;
  background: #cbcbcb;
`;
const PaletteTab = styled.button<{ $w: number; $on?: boolean }>`
  flex: 0 0 ${p => p.$w}px;
  padding-bottom: 2px;
  color: #9d9d9d;
  white-space: nowrap;
  background: ${p => (p.$on ? "#ececec" : "none")};
`;

const Collapse = () => <Icon w={9} h={10} c="#222" sw={1.3}><path d="M1.500 4.500l3-3 3 3M1.500 9l3-3 3 3" /></Icon>;
type Prop = { t?: string; dim?: boolean; kind?: "edit" | "tick" | "knob" };
const graphics: Prop[] = [
  { t: " 1/8\" = 1'-0\"" }, { t: "96", dim: true }, { t: "Fine" }, { t: "Show Original" }, { t: "Edit...", kind: "edit" },
  { t: "Edit...", kind: "edit" }, { t: "Mechanical" }, { t: "By Discipline" }, { t: "None" }, { t: "HVAC", kind: "knob" }, { kind: "tick" },
];
const extents: Prop[] = [
  { kind: "tick" }, { kind: "tick" }, { kind: "tick" }, { kind: "tick" }, { t: "1000'  0\"", dim: true }, { t: "None" },
];
const PropRows = ({ rows }: { rows: Prop[] }) => (
  <tbody>
    <GroupRow><th colSpan={3}><Collapse /></th></GroupRow>
    {rows.map((r, i) => (
      <tr key={i}>
        <th />
        <Value $dim={r.dim}>
          {r.kind === "edit" ? <EditButton>{r.t}</EditButton> : r.kind === "tick" ? <Tick type="checkbox" aria-label="value" /> : r.t}
        </Value>
        <td>{r.kind === "knob" && <Knob />}</td>
      </tr>
    ))}
  </tbody>
);

const Properties = () => (
  <Palette>
    <PaletteHead />
    <Preview><Caret c="#222" /></Preview>
    <TypeRow>
      <SelectBox $h={22}><select aria-label="Type"><option /></select><Chevron /></SelectBox>
      <EditType>
        <Icon w={16} h={16} c="#444"><path d="M1 3l2-2h4v6H1zM8 3l2-2h5v6H8M1 9h6v5H1z" /><path d="M9 6h6v9H9z" fill="#d7e6f6" stroke="#3465a0" /><path d="M11 9h2M11 12h2" stroke="#3465a0" /></Icon>
        Edit Type
      </EditType>
    </TypeRow>
    <GridArea>
      <PropTable>
        <colgroup><col /><col width={156} /><col width={12} /></colgroup>
        <PropRows rows={graphics} />
        <PropRows rows={extents} />
      </PropTable>
      <VScroll $w={13}>
        <Chevron dir="up" c="#222" />
        <Thumb $w={12} $h={146} $c="#a9a9a9" />
        <Spring />
        <Chevron c="#222" />
      </VScroll>
    </GridArea>
    <ApplyRow><a href="#help">Properties help</a><button>Apply</button></ApplyRow>
    <PaletteTabs>
      <PaletteTab $w={195}>System Browser - Mechanical_R21.rvt</PaletteTab>
      <PaletteTab $w={62} $on>Properties</PaletteTab>
    </PaletteTabs>
  </Palette>
);

/* ---------- status bar and taskbar ---------- */

const Status = styled.footer`
  flex: 0 0 22px;
  display: flex;
  align-items: center;
  background: #cacaca;
  border-bottom: 1px solid #e4e8e8;
  white-space: nowrap;
`;
const Hint = styled.p`
  flex: 0 0 318px;
  font-family: Roboto, "Open Sans", sans-serif;
  padding-top: 2px;
`;
const StatusSelect = styled.div`
  flex: 0 0 191px;
  display: flex;
  select { color: #777; }
`;
const S = "#9a9a9a";
const StatusBar = () => (
  <Status>
    <Hint>Click to select, TAB for alternates, CTRL adds, SHIFT unselects.</Hint>
    <Cell $w={24}><Icon w={17} h={17} c={S}><path d="M2 7h4v8H2zM7 4h3v11H7zM12 7h4v8h-4z" fill="#aaa" /><circle cx="6" cy="4" r="2" /><circle cx="12" cy="3" r="2" /></Icon></Cell>
    <StatusSelect><SelectBox $h={18} $bg="#fff" $b="#fff"><select aria-label="Workset"><option /></select><Chevron c="#aaa" /></SelectBox></StatusSelect>
    <Cell $w={26}><Icon c={S}><path d="M3 2h10l-1 4-5 1-1 8H4l1-7z" fill="#b4b4b4" /></Icon></Cell>
    <Cell $w={10}>:0</Cell>
    <Cell $w={18} />
    <Cell $w={24}><Icon w={14} h={16} c={S}><rect x=".5" y="1" width="13" height="14" rx="1" fill="#9d9d9d" /></Icon></Cell>
    <Cell $w={26}><Icon c={S}><path d="M1 1h13v14H1z" fill="#b0b0b0" /><path d="M8 12l5-4v8z" fill="#eee" /></Icon></Cell>
    <StatusSelect><SelectBox $h={18} $bg="#fff" $b="#fff" $pad={2}><select aria-label="Design option"><option>Main Model</option></select><Chevron c="#aaa" /></SelectBox></StatusSelect>
    <Spring />
    <Cell $w={25}><Icon c={S}><path d="M1 3h5l2 2 3-3h4v4l-5 3v5H8V9L1 6z" fill="#999" /></Icon></Cell>
    <Cell $w={24}><Icon c={S}><path d="M1 11l5-7 4-2v10l4 2H1z" fill="#999" /></Icon></Cell>
    <Cell $w={24}><Icon c={S}><path d="M4 2h7v6H4zM2 9h12v4H2z" fill="#999" /><path d="M10 10l4 5" stroke="#eee" strokeWidth="2" /></Icon></Cell>
    <Cell $w={24}><Icon c={S}><path d="M2 2h9v10l4 2H2z" fill="#999" /></Icon></Cell>
    <Cell $w={25}><Icon c={S}><path d="M6 1v10M1 6h10M4 3l2-2 2 2M4 9l2 2 2-2M10 8l4 6" strokeWidth="1.500" /></Icon></Cell>
    <Cell $w={24}><Icon c={S}><circle cx="8" cy="8" r="4.500" strokeWidth="1.500" /><circle cx="8" cy="8" r="6" strokeDasharray="2 2.700" strokeWidth="2" /></Icon></Cell>
    <Cell $w={20}><Icon w={15} h={15} c="#555" sw={1.3}><path d="M1 1.500h13L9 8v6l-3-2V8z" fill="#e6e6e6" /></Icon></Cell>
    <Cell $w={10}>:0</Cell>
    <Cell $w={64} />
  </Status>
);

const Taskbar = styled.div`
  flex: 0 0 38px;
  display: flex;
  background: #17272f;
  border-left: 1px solid #0c1418;
`;
const Start = styled.button`
  flex: 0 0 45px;
  display: flex;
  align-items: center;
  justify-content: center;
`;
const TaskSearch = styled.label`
  flex: 0 0 322px;
  display: flex;
  align-items: center;
  gap: 10px;
  padding-left: 10px;
  background: #f1f1f1;
  input { flex: 1; min-width: 0; border: 0; padding: 0; background: none; font-size: 13px; outline: 0; }
  input::placeholder { color: #333; opacity: 1; }
`;
const TaskScroll = styled.div`
  flex: 0 0 16px;
  display: flex;
  flex-direction: column;
  align-items: center;
  justify-content: space-between;
  padding: 4px 0;
  background: #f1f1f1;
`;
const Brand = styled.span`
  flex: 0 0 255px;
  display: flex;
  align-items: center;
  justify-content: space-between;
  padding: 5px 9px 0 6px;
  font-size: 14px;
  color: #9aa3a7;
  i { width: 1px; height: 3px; background: #ccc; }
`;

const WindowsTaskbar = () => (
  <Taskbar>
    <Start aria-label="Start"><Icon w={16} h={16} c="none"><path d="M0 2.300l6.500-.9v6.100H0zM7.500 1.300L16 0v7.500H7.500zM0 8.500h6.500v6.100L0 13.700zM7.500 8.500H16V16l-8.500-1.200z" fill="#fff" /></Icon></Start>
    <TaskSearch>
      <Icon w={17} h={17} c="#222" sw={1.4}><circle cx="10" cy="6.500" r="5.200" /><path d="M6.500 10.500L1.500 16" /></Icon>
      <input placeholder="Type here to search" aria-label="Search Windows" />
    </TaskSearch>
    <Spring />
    <TaskScroll><Chevron dir="up" c="#222" /><Chevron c="#222" /></TaskScroll>
    <Brand><i />ûdemy</Brand>
  </Taskbar>
);

/* ---------- report settings dialog ---------- */

const Window = styled.section<{ $x: number; $y: number; $w: number; $h: number; $top?: boolean }>`
  position: absolute;
  left: ${p => p.$x}px;
  top: ${p => p.$y}px;
  width: ${p => p.$w}px;
  height: ${p => p.$h}px;
  display: flex;
  flex-direction: column;
  background: #f0f0f0;
  border: 1px solid ${p => (p.$top ? "#585858" : "#989898")};
  box-shadow: ${p => (p.$top ? "2px 4px 10px rgba(0,0,0,.45)" : "1px 2px 8px rgba(0,0,0,.3)")};
`;
const WinTitle = styled.div<{ $h: number; $dim?: boolean }>`
  flex: 0 0 ${p => p.$h}px;
  display: flex;
  align-items: center;
  padding: 0 9px 2px 7px;
  background: #fff;
  color: ${p => (p.$dim ? "#8e8e8e" : "#222")};
  h2 { flex: 1; padding-left: ${p => (p.$dim ? 0 : 4)}px; }
  button { color: inherit; }
`;
const FormatRow = styled.div`
  display: flex;
  align-items: center;
  padding: 9px 9px 0 9px;
  label { flex: 0 0 78px; padding-bottom: 2px; }
`;
const FormatButton = styled.button<{ $gap: number }>`
  width: 71px;
  height: 19px;
  margin-left: ${p => p.$gap}px;
  background: #e1e1e1;
  border: 1px solid #777;
`;
const FieldGroup = styled.fieldset`
  margin: 14px 5px 0 6px;
  padding: 8px 6px 0;
  height: 386px;
  border: 1px solid #dcdfe2;
  display: flex;
  gap: 80px;
  > div { flex: 0 0 185px; }
`;
const FieldName = styled.p`padding: 0 4px 5px; line-height: 15px;`;
const FieldList = styled.div`height: 213px; background: #fff; border: 1px solid #888;`;
const Stack = styled.div`
  display: grid;
  gap: 13px;
  padding-top: 39px;
  input { appearance: none; display: block; width: 13px; height: 13px; margin: 0; border: 1px solid #777; background: #fff; }
`;

const ReportSettings = () => (
  <Window $x={456} $y={74} $w={478} $h={537} aria-label="Duct Pressure Loss Report Settings">
    <WinTitle $h={28} $dim>
      <h2>Duct Pressure Loss Report Settings</h2>
      <Cell $w={58} as="button" aria-label="Help">?</Cell>
      <Cell $w={26} as="button" aria-label="Close"><Cross s={10} c="#8a8a8a" sw={1} /></Cell>
    </WinTitle>
    <FormatRow>
      <label htmlFor="fmt">Report Format:</label>
      <SelectBox $h={19} $b="#9c9c9c"><select id="fmt"><option>SA-1</option></select><Chevron sw={1} /></SelectBox>
      <FormatButton $gap={5}>Save</FormatButton>
      <FormatButton $gap={8}>Delete</FormatButton>
    </FormatRow>
    <FieldGroup>
      <div>
        <FieldName>Available Fields:</FieldName>
        <FieldList />
        <Stack>{[0, 1, 2, 3].map(i => <input key={i} type="checkbox" aria-label="Report option" />)}</Stack>
      </div>
      <div>
        <FieldName>Report Fields (in order):</FieldName>
        <FieldList />
      </div>
    </FieldGroup>
  </Window>
);

/* ---------- save dialog ---------- */

const NavRow = styled.div`
  flex: 0 0 34px;
  display: flex;
  align-items: center;
  padding: 0 11px 1px 3px;
  background: #fff;
`;
const Address = styled.div`
  flex: 1 1 0;
  height: 21px;
  display: flex;
  align-items: center;
  padding-left: 2px;
  border: 1px solid #d5d5d5;
`;
const Crumb = styled.button<{ $w: number }>`flex: 0 0 ${p => p.$w}px; text-align: left; white-space: nowrap;`;
const SearchField = styled.label`
  flex: 0 0 189px;
  height: 21px;
  margin-left: 11px;
  padding: 0 7px;
  display: flex;
  align-items: center;
  border: 1px solid #d5d5d5;
  input { flex: 1; min-width: 0; border: 0; padding: 0; outline: 0; }
  input::placeholder { color: #666; opacity: 1; }
`;
const Tools = styled.div`
  flex: 0 0 28px;
  display: flex;
  align-items: center;
  padding: 0 8px 0 16px;
  background: #f4f6f9;
  border-bottom: 1px solid #e2e6ea;
`;
const ToolButton = styled.button<{ $w: number }>`
  flex: 0 0 ${p => p.$w}px;
  display: flex;
  align-items: center;
  gap: 5px;
  color: #1f2f55;
  white-space: nowrap;
`;
const Browser = styled.div`
  flex: 0 0 243px;
  display: flex;
  background: #fff;
`;
const Side = styled.nav`flex: 0 0 130px; padding-top: 1px;`;
const Places = styled.ul`height: 203px; display: grid; grid-auto-rows: 1fr;`;
const Place = styled.li<{ $on?: boolean; $root?: boolean }>`
  display: flex;
  align-items: center;
  gap: ${p => (p.$root ? 4 : 5)}px;
  padding: 0 0 2px ${p => (p.$root ? 21 : 28)}px;
  background: ${p => (p.$on ? "#d9d9d9" : "none")};
  white-space: nowrap;
`;
const NetworkRow = styled.div`margin-top: 7px; height: 22px; display: grid;`;
const Files = styled.div`
  flex: 1 1 0;
  min-width: 0;
  display: flex;
  flex-direction: column;
`;
const FileArea = styled.div`position: relative; flex: 1 1 0; overflow: hidden;`;
const SortMark = styled.span`position: absolute; left: 219px; top: 0;`;
const FileTable = styled.table`
  width: 100%;
  table-layout: fixed;
  border-collapse: collapse;
  th, td { padding: 0; height: 26px; font-weight: 400; text-align: left; white-space: nowrap; color: #45556f; }
  th { height: 25px; }
  th:first-child, td:first-child { padding-left: 20px; }
  th + th { border-left: 1px solid #e3e3e3; }
  th + th, td + td { padding-left: 7px; }
  td { color: #1e1e1e; padding-top: 3px; }
  td + td { color: #777; }
`;
const FileName = styled.span`display: flex; align-items: center; gap: 4px; padding-left: 1px;`;
const HScroll = styled.div`
  flex: 0 0 15px;
  margin-left: 3px;
  display: flex;
  align-items: center;
  background: #f0f0f0;
`;
const Form = styled.div`
  display: grid;
  grid-template-columns: 111px 1fr;
  column-gap: 5px;
  row-gap: 3px;
  padding: 9px 5px 0 0;
  label { text-align: right; align-self: center; }
`;
const TextCursor = styled.i`position: absolute; left: 30px; top: 4px; width: 1px; height: 14px; background: #000;`;
const Foot = styled.div`
  flex: 1 1 0;
  display: flex;
  align-items: flex-start;
  padding: 19px 16px 0 10px;
`;
const HideButton = styled.button`
  flex: 1 1 0;
  display: flex;
  align-items: center;
  gap: 7px;
  margin-top: 6px;
`;
const DialogButton = styled.button<{ $primary?: boolean }>`
  width: 81px;
  height: 23px;
  margin-left: ${p => (p.$primary ? 0 : 13)}px;
  background: #e1e1e1;
  border: ${p => (p.$primary ? "2px solid #1864b0" : "1px solid #acacac")};
`;
const GripCorner = styled.span`position: absolute; right: 1px; bottom: 1px;`;

const Folder = ({ s = 14 }: { s?: number }) => (
  <Icon w={s} h={16} vb="0 0 14 16" c="none"><path d="M1 1h8l1 2h3v12H1z" fill="#f5d673" /><path d="M1 1h8v14H1z" fill="#fae08c" /><path d="M11 10h2v5h-2z" fill="#e3bd54" /></Icon>
);
const disk = <><path d="M3 8h11l2 3v4H1v-4z" fill="#c9c9c9" /><path d="M1 11h15v4H1z" fill="#2f3437" /><path d="M12 12.500h2" stroke="#6fd07f" /></>;
const placeIcons: Record<string, React.ReactNode> = {
  Documents: <><path d="M3 1h8l3 3v11H3z" fill="#fff" stroke="#808890" /><path d="M5 5h4M5 7.500h7M5 10h3M9 10h3M5 12.500h7" stroke="#3f9bd8" strokeWidth="1.500" /></>,
  Downloads: <path d="M6 1h5v7h5l-7.500 7.500L1 8h5z" fill="#2a86d8" />,
  Music: <path d="M8 0c1 4 7 4 5 10-1-3-2-3.500-4-4v7c0 2-1.500 3-3.500 3s-3-1.500-2-3S6 11 7 11.500V0z" fill="#1e88e0" />,
  Pictures: <><path d="M1 3h15v11H1z" fill="#fff" stroke="#8c949c" /><path d="M3 5h11v7H3z" fill="#7fb7e4" /><path d="M3 9l4-2 7 3v2H3z" fill="#2f5f6f" /></>,
  Videos: <><path d="M3 1h12v14H3z" fill="#2e3238" /><path d="M6 2h6v5H6zM6 9h6v5H6z" fill="#6f8fc4" /><path d="M6 5l3-2 3 3v1H6zM6 12l3-1 3 2v1H6z" fill="#c8b43c" /><path d="M4.500 2v12M13.500 2v12" stroke="#ddd" strokeDasharray="1 2" /></>,
  "Local Disk (C:)": <>{disk}<path d="M1 1h2.500v2.500H1zM4.500 1H7v2.500H4.500zM1 4.500h2.500V7H1zM4.500 4.500H7V7H4.500z" fill="#2aa5d8" /></>,
};

const SaveAs = () => (
  <Window $x={473} $y={177} $w={626} $h={443} $top role="dialog" aria-label="Save As">
    <WinTitle $h={27}>
      <RevitLogo s={15} />
      <h2>Save As</h2>
      <button aria-label="Close"><Cross s={10} sw={1.1} /></button>
    </WinTitle>
    <NavRow>
      <Cell $w={27} as="button" aria-label="Back"><Icon w={12} h={10} c="#555" sw={1.4}><path d="M12 5H1.500M5.500 1l-4 4 4 4" /></Icon></Cell>
      <Cell $w={29} as="button" aria-label="Forward"><Icon w={12} h={10} c="#d0d0d0" sw={1.4}><path d="M0 5h10.500M6.500 1l4 4-4 4" /></Icon></Cell>
      <Cell $w={16} as="button" aria-label="Recent"><Icon w={8} h={6} c="#777" sw={1.3}><path d="M1 1l3 3 3-3" /></Icon></Cell>
      <Cell $w={24} as="button" aria-label="Up"><Icon w={10} h={12} c="#555" sw={1.4}><path d="M5 12V1.500M1 5.500l4-4 4 4" /></Icon></Cell>
      <Address>
        <Folder />
        <Cell $w={20}><Icon w={8} h={6} c="#444"><path d="M3.500.5L1 3l2.500 2.500M7.500.5L5 3l2.500 2.500" /></Icon></Cell>
        <Crumb $w={60}>Pakha_2021</Crumb>
        <Cell $w={18}><Icon w={5} h={8} c="#555" sw={1.2}><path d="M1 1l3 3-3 3" /></Icon></Cell>
        <Crumb $w={85}>Revit HVAC 2021</Crumb>
        <Spring />
        <Cell $w={18}><Chevron /></Cell>
        <VLine $h={19} $c="#d9d9d9" />
        <Cell $w={19} as="button" aria-label="Refresh"><Icon w={11} h={12} c="#555" sw={1.4}><path d="M3.500 2.500a4.200 4.200 0 1 0 4.500 0M1.500 1.500H5V5" /></Icon></Cell>
      </Address>
      <SearchField>
        <input placeholder="Search Revit HVAC 2021" aria-label="Search Revit HVAC 2021" />
        <Icon w={12} h={12} c="#555" sw={1.3}><circle cx="7.500" cy="4.500" r="3.500" /><path d="M5 7L1 11" /></Icon>
      </SearchField>
    </NavRow>
    <Tools>
      <ToolButton $w={85}>Organize <Caret c="#1f2f55" /></ToolButton>
      <ToolButton $w={80}>New folder</ToolButton>
      <Spring />
      <Cell $w={26}><Icon w={16} h={12} c="#888"><path d="M.5.500h4v11h-4zM.5 4h4M.5 8h4" /><path d="M6 1.500h10M6 5.500h10M6 9.500h10" strokeDasharray="4 2" /></Icon></Cell>
      <Cell $w={14}><Caret c="#1b2750" /></Cell>
      <Cell $w={24} />
      <Icon w={16} h={16} c="none"><circle cx="8" cy="8" r="7.500" fill="#1259b5" /><path d="M5.800 6.300c0-1.600 1-2.300 2.200-2.300s2.200.8 2.200 2S8 7.600 8 9.300M8 10.500v1.800" stroke="#fff" strokeWidth="1.600" /></Icon>
      <Cell $w={5} />
    </Tools>
    <Browser>
      <Side>
        <Places>
          {["Documents", "Downloads", "Music", "Pictures", "Videos", "Local Disk (C:)", "Local Disk (D:)", "Local Disk (E:)", "Local Disk (F:)"].map(n => (
            <Place key={n} $on={n === "Local Disk (D:)"}><Icon w={15} h={15} vb="0 0 17 16" c="none">{placeIcons[n] || disk}</Icon>{n}</Place>
          ))}
        </Places>
        <NetworkRow>
          <Place as="div" $root><Icon w={16} h={16} c="none"><circle cx="11" cy="6" r="5" fill="#58b4e8" /><path d="M1 6l10-2v7L1 12z" fill="#1f86d4" /><path d="M2.500 7.200L9.500 6v4l-7 .8z" fill="#6cc0f2" /><path d="M4 12l4-.5v2.500l-4 .5z" fill="#7d8a94" /></Icon>Network</Place>
        </NetworkRow>
      </Side>
      <VScroll $w={15}>
        <Chevron dir="up" c="#333" />
        <Spring />
        <Thumb $w={14} $h={134} />
        <Chevron c="#333" />
      </VScroll>
      <Files>
        <FileArea>
          <SortMark><Icon w={10} h={6} c="#777"><path d="M1 5l4-3.500L9 5" /></Icon></SortMark>
          <FileTable>
            <colgroup><col /><col width={47} /></colgroup>
            <thead><tr><th>Name</th><th>Date</th></tr></thead>
            <tbody><tr><td><FileName><Folder s={14} />Project Files</FileName></td><td>7/19/2021</td></tr></tbody>
          </FileTable>
        </FileArea>
        <HScroll>
          <Cell $w={17}><Chevron dir="left" c="#222" /></Cell>
          <Thumb $w={237} $h={14} />
          <Spring />
          <Cell $w={15}><Chevron dir="right" c="#222" /></Cell>
        </HScroll>
      </Files>
    </Browser>
    <Form>
      <label htmlFor="fn">File <u>n</u>ame:</label>
      <SelectBox $h={22} $bg="#fff" $b="#3c84c4" $pad={5}><input id="fn" defaultValue="Loss Report" /><TextCursor /><Chevron sw={1.2} /></SelectBox>
      <label htmlFor="ty">Save as <u>t</u>ype:</label>
      <SelectBox $h={21} $bg="#e1e1e1" $b="#adadad" $pad={3}><select id="ty"><option>Web Page (*.html)</option></select><Chevron sw={1.2} /></SelectBox>
    </Form>
    <Foot>
      <HideButton><Chevron dir="up" c="#333" /> Hide Folders</HideButton>
      <DialogButton $primary><u>S</u>ave</DialogButton>
      <DialogButton>Cancel</DialogButton>
    </Foot>
    <GripCorner><Grip /></GripCorner>
  </Window>
);

/* ---------- pointer ---------- */

const Halo = styled.div`
  position: absolute;
  left: 617px;
  top: 168px;
  width: 52px;
  height: 52px;
  border-radius: 50%;
  background: #f8f19c;
  mix-blend-mode: multiply;
`;
const Pointer = styled.div`position: absolute; left: 642px; top: 191px;`;

export default function App() {
  return (
    <Screen>
      <Global />
      <AppFrame>
        <TopBar />
        <TabRow>
          {tabs.map(([name, w, kind]) => <RibbonTab key={name} $w={w} $kind={kind}>{name}</RibbonTab>)}
          <Cell $w={64}>
            <Icon w={24} h={10} c="#444"><rect x=".5" y="1" width="13" height="8" rx="2" fill="#e4e4e4" /><path d="M5 6l2-2.500L9 6z" fill="#333" /><path d="M19 4h4l-2 2.500z" fill="#222" /></Icon>
          </Cell>
        </TabRow>
        <Ribbon />
        <QuickAccess />
        <OptionsBar />
        <WorkArea>
          <View $w={457}>
            <ViewTabs>
              <ViewTab><Icon w={16} h={16} c="#555"><House /></Icon><span>&#123;3D&#125;</span><Cross s={8} sw={2} /></ViewTab>
              <Icon w={9} h={8} c="#222"><path d="M1 1h8" /><path d="M1 3h8L5 7z" fill="#222" stroke="none" /></Icon>
            </ViewTabs>
            <ViewBody>
              <Canvas><Model /></Canvas>
              <VScroll $w={12}><Chevron dir="up" c="#222" /><Spring /><Thumb $w={12} $h={17} /><Spring /><Chevron c="#222" /></VScroll>
            </ViewBody>
            <ViewControls scale={"1/8\" = 1'-0\""} w={71} icons={leftIcons} pre={36} />
          </View>
          <Gutter $w={7} />
          <View>
            <ViewTabs />
            <ViewBody>
              <Canvas />
              <VScroll $w={17}><Chevron dir="up" c="#222" /><Chevron c="#222" /></VScroll>
            </ViewBody>
            <ViewControls scale={"3/16\" = 1'-0\""} w={74} icons={rightIcons} pre={63} />
          </View>
          <Gutter $w={5} />
          <Properties />
        </WorkArea>
        <StatusBar />
      </AppFrame>
      <WindowsTaskbar />
      <ReportSettings />
      <SaveAs />
      <Halo />
      <Pointer><Icon w={12} h={18} c="#222"><path d="M1.500 1v14l3.500-3 2 5 2-1-2-4.500h4z" fill="#fff" /></Icon></Pointer>
    </Screen>
  );
}
